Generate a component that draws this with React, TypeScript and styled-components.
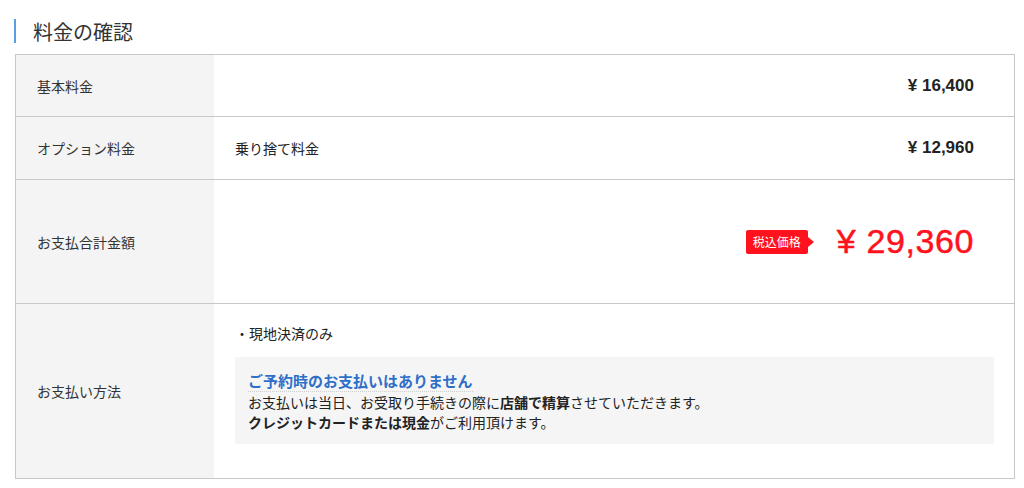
import React from "react";
import styled, { createGlobalStyle } from "styled-components";

const Global = createGlobalStyle`
  html, body { margin: 0; padding: 0; background: #fff; }
  body {
    font-family: "Liberation Sans", "Noto Sans CJK JP", sans-serif;
    color: #333;
    -webkit-font-smoothing: antialiased;
  }
`;

const Page = styled.div`
  width: 1024px;
  padding-top: 19px;
`;

const Title = styled.h2`
  display: flex;
  align-items: center;
  height: 24px;
  margin: 0 0 11px 14px;
  padding-left: 17px;
  border-left: 2px solid #5d9be3;
  font-size: 20px;
  font-weight: 400;
  color: #333;
  font-family: "Noto Sans CJK JP", sans-serif;
`;

const Table = styled.div`
  margin-left: 15px;
  width: 1000px;
  box-sizing: border-box;
  border: 1px solid #c8c8c8;
`;

const Row = styled.div<{ $h: number }>`
  display: grid;
  grid-template-columns: 198px 1fr;
  min-height: ${(p) => p.$h}px;
  & + & {
    border-top: 1px solid #c8c8c8;
  }
`;

const Label = styled.div`
  display: flex;
  align-items: center;
  padding-left: 21px;
  background: #f4f4f4;
  font-size: 14px;
  color: #333;
  font-family: "Noto Sans CJK JP", sans-serif;
`;

const Value = styled.div<{ $end?: boolean }>`
  display: flex;
  align-items: center;
  justify-content: ${(p) => (p.$end ? "flex-end" : "space-between")};
  padding: 0 40px 0 21px;
  font-size: 14px;
  color: #222;
`;

const Item = styled.span`
  font-family: "Noto Sans CJK JP", sans-serif;
  font-size: 14px;
`;

const Amount = styled.span`
  font-size: 17px;
  font-weight: 700;
  color: #222;
  margin-left: auto;
`;

const Badge = styled.span`
  position: relative;
  display: inline-flex;
  align-items: center;
  height: 24px;
  padding: 0 7px;
  background: #ff111d;
  color: #fff;
  font-size: 12px;
  border-radius: 2px;
  font-family: "Noto Sans CJK JP", sans-serif;
  margin-right: 29px;
  &::after {
    content: "";
    position: absolute;
    right: -6px;
    top: 50%;
    transform: translateY(-50%);
    border-left: 6px solid #ff111d;
    border-top: 5px solid transparent;
    border-bottom: 5px solid transparent;
  }
`;

const Total = styled.span`
  font-size: 34px;
  color: #ff111d;
  letter-spacing: 0.6px;
  -webkit-text-stroke: 0.5px #ff111d;
`;

const MethodCell = styled.div`
  display: flex;
  flex-direction: column;
  padding: 19px 20px 32px 21px;
  font-family: "Noto Sans CJK JP", sans-serif;
  font-size: 14px;
  color: #222;
`;

const Bullet = styled.div`
  line-height: 20px;
  margin-bottom: 14px;
`;

const Notice = styled.div`
  background: #f5f5f5;
  padding: 14px 13px 12px;
  line-height: 20px;
`;

const NoticeTitle = styled.span`
  display: inline-block;
  font-size: 15px;
  font-weight: 700;
  color: #2d6fc8;
  line-height: 20px;
  border-bottom: 1px dotted #cfcfcf;
`;

const NoticeLine = styled.div`
  line-height: 20px;
`;

export default function App() {
  return (
    <Page>
      <Global />
      <Title>料金の確認</Title>
      <Table>
        <Row $h={61}>
          <Label>基本料金</Label>
          <Value $end>
            <Amount>¥ 16,400</Amount>
          </Value>
        </Row>
        <Row $h={62}>
          <Label>オプション料金</Label>
          <Value>
            <Item>乗り捨て料金</Item>
            <Amount>¥ 12,960</Amount>
          </Value>
        </Row>
        <Row $h={123}>
          <Label>お支払合計金額</Label>
          <Value $end>
            <Badge>税込価格</Badge>
            <Total>¥ 29,360</Total>
          </Value>
        </Row>
        <Row $h={174}>
          <Label>お支払い方法</Label>
          <MethodCell>
            <Bullet>・現地決済のみ</Bullet>
            <Notice>
              <NoticeTitle>ご予約時のお支払いはありません</NoticeTitle>
              <NoticeLine>
                お支払いは当日、お受取り手続きの際に<b>店舗で精算</b>させていただきます。
              </NoticeLine>
              <NoticeLine>
                <b>クレジットカードまたは現金</b>がご利用頂けます。
              </NoticeLine>
            </Notice>
          </MethodCell>
        </Row>
      </Table>
    </Page>
  );
}
